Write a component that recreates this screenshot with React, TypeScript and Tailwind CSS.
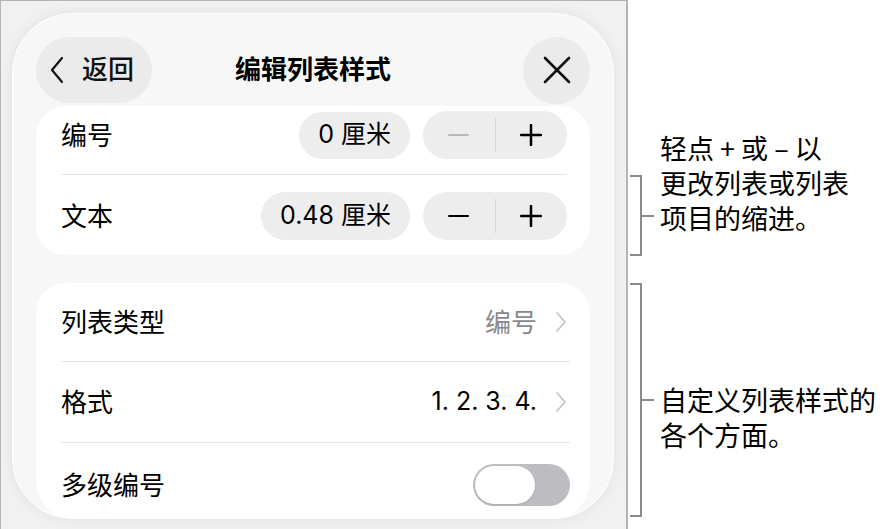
import React from "react";

const ui = { fontFamily: "Inter, 'Noto Sans CJK SC', sans-serif" } as const;
const note = { fontFamily: "'Noto Sans CJK SC', 'Noto Sans', sans-serif" } as const;

function Chevron() {
  return (
    <svg width="12" height="22" viewBox="0 0 12 22" fill="none" className="ml-[18px]">
      <polyline points="2,2 10,11 2,20" stroke="#c4c4c7" strokeWidth="1.8" strokeLinecap="round" strokeLinejoin="round" />
    </svg>
  );
}

function Stepper({ minusDisabled }: { minusDisabled?: boolean }) {
  return (
    <div className="ml-[13px] flex h-[48px] w-[144px] items-center rounded-full bg-[#ededee]">
      <div className="flex h-full flex-1 items-center justify-center">
        <div className={`h-[2.5px] w-[21px] rounded-full ${minusDisabled ? "bg-[#b8b8ba]" : "bg-black"}`} />
      </div>
      <div className="h-[34px] w-px bg-[#d6d6d8]" />
      <div className="flex h-full flex-1 items-center justify-center">
        <svg width="22" height="22" viewBox="0 0 22 22">
          <line x1="11" y1="1" x2="11" y2="21" stroke="black" strokeWidth="2.5" strokeLinecap="round" />
          <line x1="1" y1="11" x2="21" y2="11" stroke="black" strokeWidth="2.5" strokeLinecap="round" />
        </svg>
      </div>
    </div>
  );
}

function Bracket({ h }: { h: number }) {
  return (
    <div className="flex items-center pl-[2px]">
      <div className="w-[12px] border-y-2 border-r-2 border-[#8c8c8c]" style={{ height: h }} />
      <div className="h-[2px] w-[12px] bg-[#8c8c8c]" />
    </div>
  );
}

export default function App() {
  return (
    <div className="flex h-[529px] w-[886px] bg-white">
      {/* Screenshot area */}
      <div className="h-[529px] w-[628px] border-l border-t border-r-2 border-[#b4b4b4] bg-[#f1f1f1] pl-[11px] pt-[12px]">
        <div
          className="h-[506px] w-[602px] overflow-hidden rounded-[60px] border-[1.5px] border-white bg-[#f7f7f7] px-[23px] pt-[23px] shadow-[0_0_14px_rgba(0,0,0,0.07)]"
          style={ui}
        >
          {/* Header */}
          <div className="flex h-[66px] items-center">
            <div className="w-[116px]">
              <div className="flex h-[66px] w-[116px] items-center rounded-full bg-[#ebebeb] pl-[13px]">
                <svg width="16" height="28" viewBox="0 0 16 28" fill="none">
                  <polyline points="13,2 3,14 13,26" stroke="#111" strokeWidth="2.2" strokeLinecap="round" strokeLinejoin="round" />
                </svg>
                <span className="ml-[17px] text-[26px] font-medium leading-none text-[#111]">返回</span>
              </div>
            </div>
            <div className="flex-1 text-center text-[26px] font-semibold leading-none text-black">编辑列表样式</div>
            <div className="flex w-[116px] justify-end">
              <div className="flex h-[67px] w-[67px] items-center justify-center rounded-full bg-[#ebebeb]">
                <svg width="28" height="28" viewBox="0 0 28 28">
                  <line x1="2" y1="2" x2="26" y2="26" stroke="#111" strokeWidth="2.6" strokeLinecap="round" />
                  <line x1="26" y1="2" x2="2" y2="26" stroke="#111" strokeWidth="2.6" strokeLinecap="round" />
                </svg>
              </div>
            </div>
          </div>

          {/* Section 1 */}
          <div className="mt-[3px] rounded-[30px] bg-white pb-[15px] pl-[25px] pr-[23px] pt-[5px]">
            <div className="flex h-[48px] items-center">
              <span className="flex-1 text-[26px] text-black">编号</span>
              <div className="flex h-[47px] items-center rounded-full bg-[#ededee] px-[19px] text-[25px] text-black">0 厘米</div>
              <Stepper minusDisabled />
            </div>
            <div className="mt-[15px] h-px bg-[#e4e4e6]" />
            <div className="mt-[17px] flex h-[48px] items-center">
              <span className="flex-1 text-[26px] text-black">文本</span>
              <div className="flex h-[48px] items-center rounded-full bg-[#ededee] px-[19px] text-[25px] text-black">0.48 厘米</div>
              <Stepper />
            </div>
          </div>

          {/* Section 2 */}
          <div className="mt-[28px] h-[240px] rounded-b-[44px] rounded-t-[30px] bg-white pl-[25px] pr-[20px]">
            <div className="flex h-[79px] items-center border-b border-[#e4e4e6] pr-[3px]">
              <span className="flex-1 text-[26px] text-black">列表类型</span>
              <span className="text-[26px] text-[#8a8a8e]">编号</span>
              <Chevron />
            </div>
            <div className="flex h-[81px] items-center border-b border-[#e4e4e6] pr-[3px]">
              <span className="flex-1 text-[26px] text-black">格式</span>
              <span className="text-[25px] text-black">1. 2. 3. 4.</span>
              <Chevron />
            </div>
            <div className="flex h-[84px] items-center">
              <span className="flex-1 text-[26px] text-black">多级编号</span>
              <div className="flex h-[42px] w-[97px] items-center rounded-full bg-[#bdbdc1] p-[2px]">
                <div className="h-[38px] w-[60px] rounded-full bg-white shadow-[0_1px_2px_rgba(0,0,0,0.12)]" />
              </div>
            </div>
          </div>
        </div>
      </div>

      {/* Annotations */}
      <div className="flex flex-col pt-[130px] text-black" style={note}>
        <div className="flex items-start">
          <div className="mt-[45px]">
            <Bracket h={81} />
          </div>
          <div className="ml-[6px] text-[27px] leading-[35px]">
            <div>轻点 + 或 – 以</div>
            <div>更改列表或列表</div>
            <div>项目的缩进。</div>
          </div>
        </div>
        <div className="mt-[27px] flex items-start">
          <Bracket h={234} />
          <div className="ml-[6px] mt-[99px] text-[27px] leading-[35px]">
            <div>自定义列表样式的</div>
            <div>各个方面。</div>
          </div>
        </div>
      </div>
    </div>
  );
}
